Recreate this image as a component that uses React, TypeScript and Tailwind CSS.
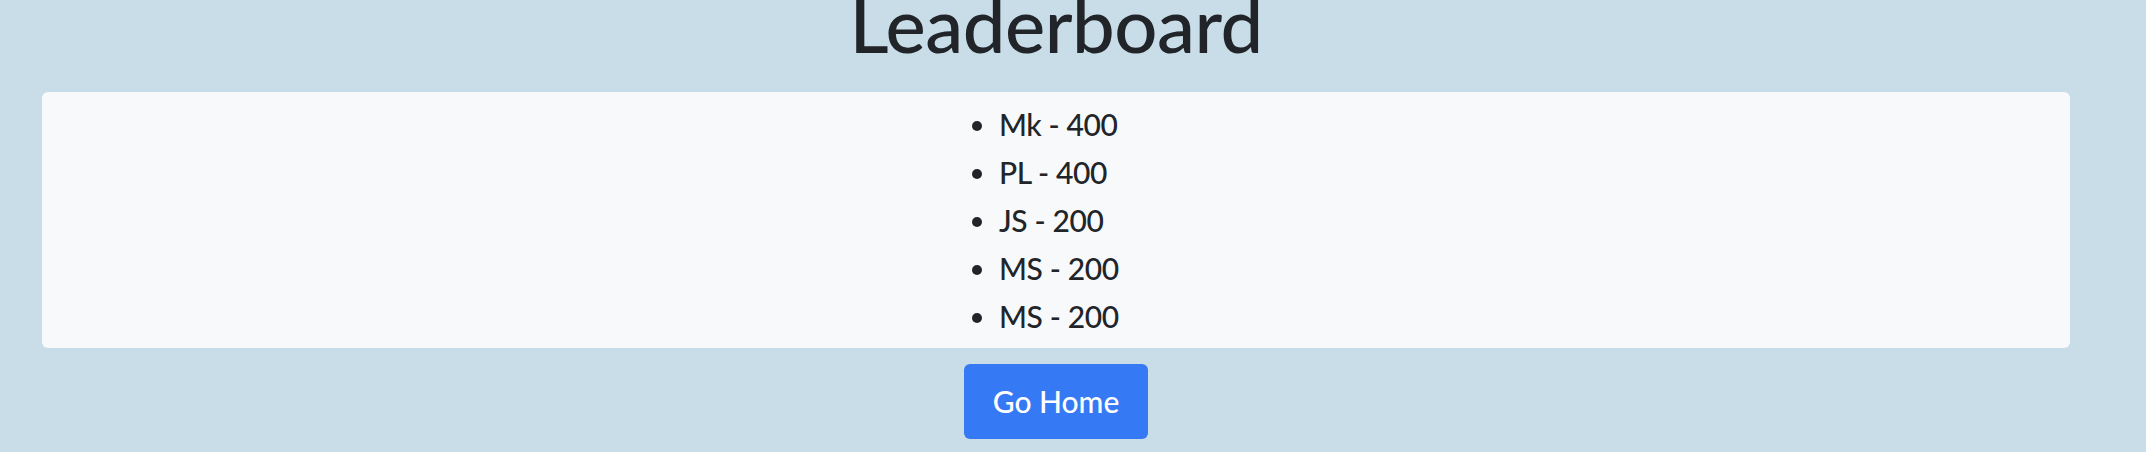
export default function App() {
  const scores = [
    { name: 'Mk', score: 400 },
    { name: 'PL', score: 400 },
    { name: 'JS', score: 200 },
    { name: 'MS', score: 200 },
    { name: 'MS', score: 200 },
  ];

  return (
    <div className="min-h-[452px] w-full overflow-hidden bg-[#c8dde7] font-['Lato',_'Noto_Sans',_sans-serif] text-[#212529]">
      <div className="flex w-[2112px] flex-col items-center px-[42px]">
        <h1 className="mt-[-26px] text-[76px] leading-[100px] font-medium tracking-[-0.5px]">Leaderboard</h1>
        <div className="mt-[18px] flex h-[256px] w-full justify-center rounded-[6px] bg-[#f8f9fa] py-2">
          <ul className="w-[178px] list-disc pl-8 text-[30px] leading-[48px] font-medium tracking-[-0.4px]">
            {scores.map((s, i) => (
              <li key={i}>
                {s.name} - {s.score}
              </li>
            ))}
          </ul>
        </div>
        <button className="mt-4 h-[75px] w-[184px] rounded-[6px] bg-[#3679f5] text-[30px] font-medium text-white">
          Go Home
        </button>
      </div>
    </div>
  );
}
